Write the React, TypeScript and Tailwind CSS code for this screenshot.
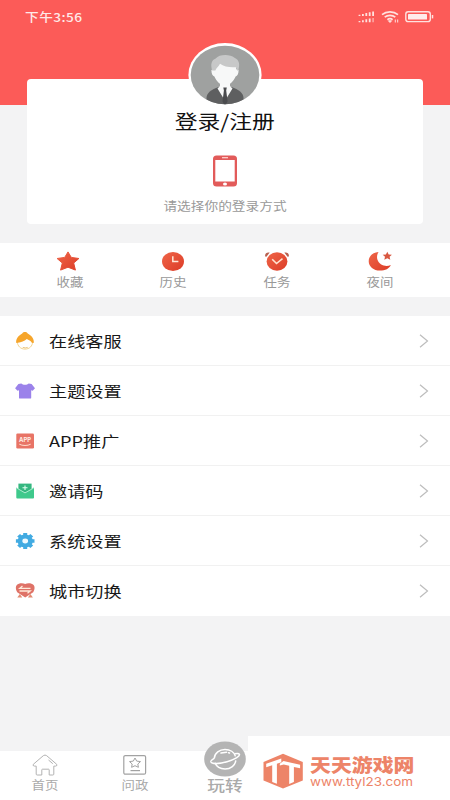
import type { ReactNode } from "react"

const CJK = "font-['Noto_Sans_CJK_SC',sans-serif]"

function StarIcon() {
  return (
    <svg className="w-6 h-5 -ml-[3px]" viewBox="0 0 24 20" fill="url(#warm)" stroke="url(#warm)" strokeWidth="1" strokeLinejoin="round">
      <path d="M12 .9l3.300 5.500 7.600 1.100-5.200 4.500 1.700 7.100L12 16.200l-7.400 2.900L6.300 12 1.100 7.500l7.600-1.100z" />
    </svg>
  )
}

function ClockIcon() {
  return (
    <svg className="w-6 h-5" viewBox="0 0 24 20">
      <ellipse cx="12" cy="10.500" rx="11" ry="9.400" fill="url(#warm)" />
      <path d="M11.800 5.300v5.200h5.600" fill="none" stroke="#ffe9d8" strokeWidth="1.500" />
    </svg>
  )
}

function AlarmIcon() {
  return (
    <svg className="w-6 h-5" viewBox="0 0 24 20">
      <path d="M.2 5.600C-.4 2.400 2 .8 4.700 1.600L1.400 5.800zM23.800 5.600c.6-3.200-1.800-4.800-4.500-4l3.300 4.200z" fill="#b8604f" />
      <ellipse cx="12" cy="10.500" rx="10.400" ry="9.200" fill="url(#warm)" />
      <path d="M7.200 8.200l4.300 4.300 6-4.800" fill="none" stroke="#ffe3d0" strokeWidth="1.600" />
    </svg>
  )
}

function MoonIcon() {
  return (
    <svg className="w-6 h-5" viewBox="0 0 24 20" fill="url(#warm)">
      <path d="M10.500 1C4.500 1.300.700 5.300.700 10.200c0 5.300 4.900 9.400 11.200 9.400 5.300 0 9.600-2.200 10.900-5.700-2.200 1.200-4.600 1.500-7.100.7C9.700 12.700 7.200 6.200 10.500 1z" />
      <path d="M19.300.8l1.400 2.600 3.200.4-2.300 2 .7 3-3-1.500-3 1.500.7-3-2.300-2 3.200-.4z" fill="#d85840" />
    </svg>
  )
}

function ServiceIcon() {
  return (
    <svg className="w-5 h-5" viewBox="0 0 20 20">
      <path d="M2.300 10.500c.2 4.800 3.400 7.600 7.700 7.600s7.500-2.800 7.700-7.600L12 7z" fill="#fff" stroke="#f1cf83" strokeWidth=".9" />
      <path d="M1.300 12C.6 7.800 3 5 7.200 2.400 8.500.6 11.400.6 12.700 2.400 17 5 19.400 7.800 18.700 12l-1.900-.2c-.5-1.600-2.300-2.500-5-3.800-2.600 2-5.500 3.400-8.900 3.800z" fill="#f6a52b" />
      <path d="M7.800 16.400q2.700 1 4.900 0" fill="none" stroke="#e7b862" strokeWidth=".8" />
    </svg>
  )
}

function ShirtIcon() {
  return (
    <svg className="w-5 h-5" viewBox="0 0 20 20">
      <path d="M6.300 2.500c1.700 1.800 5.700 1.800 7.400 0l2.900.5 3.400 4.200-2.300 2.600-1.500-.6v7.500c0 .5-.3.900-.8.900H4.800c-.5 0-.8-.4-.8-.9V9.200l-1.500.6L.1 7.200 3.400 3z" fill="#9b82ea" />
    </svg>
  )
}

function AppIcon() {
  return (
    <svg className="w-5 h-5" viewBox="0 0 20 20">
      <rect x="1.300" y="2.500" width="17.700" height="15" rx="1.200" fill="#e87466" />
      <text x="10" y="10.800" textAnchor="middle" fontSize="5.800" fontWeight="700" textLength="12" lengthAdjust="spacingAndGlyphs" fill="#fff0e6" fontFamily="Inter, sans-serif">
        APP
      </text>
      <path d="M4.300 13.200c3 1.700 8.400 1.700 11.400 0" fill="none" stroke="#ffe0d0" strokeWidth="1" />
    </svg>
  )
}

function InviteIcon() {
  return (
    <svg className="w-5 h-5" viewBox="0 0 20 20">
      <path d="M3.400 2.600h13.200v9H3.400z" fill="#35b780" />
      <path d="M1.300 6.500l8.700 5 9-5v10.100c0 .5-.3.900-.9.900H2.200c-.6 0-.9-.4-.9-.9z" fill="#3fc98c" />
      <path d="M1.600 7l8.400 4.900L18.700 7" fill="none" stroke="#c9f3df" strokeWidth=".8" />
      <path d="M10 4.400v4.600M7.500 6.700h5" stroke="#e2fff1" strokeWidth="1.100" />
    </svg>
  )
}

function GearIcon() {
  return (
    <svg className="w-5 h-5" viewBox="0 0 20 20">
      <g transform="translate(10.200 10) scale(1 .86)">
        <circle r="7.600" fill="#42abe2" />
        <g stroke="#42abe2" strokeWidth="4" strokeLinejoin="round">
          <path d="M0-9.300V9.300M-9.300 0H9.300M-6.600-6.600L6.600 6.600M6.600-6.600L-6.600 6.600" />
        </g>
        <circle r="2.900" fill="#effaff" />
      </g>
    </svg>
  )
}

function SwitchIcon() {
  return (
    <svg className="w-5 h-5" viewBox="0 0 20 20">
      <path d="M10.200 3C8 1.800 3.600 1.900 1.800 4.100.3 6 .6 8.700 2.200 11.200l8 5.200 8-5.200c1.600-2.500 1.900-5.200.4-7.100-1.800-2.200-6.200-2.300-8.400-1.100z" fill="#df7267" />
      <path d="M15.500 7.300H4.800l2.700-2.200M4.500 10h10.700l-2.700 2.200" fill="none" stroke="#ffeada" strokeWidth="1.300" />
      <path d="M4.800 13l-2.500 3.400h5zM15.400 13l-2.500 3.400h5z" fill="#e38b72" />
    </svg>
  )
}

function Avatar() {
  return (
    <svg className="w-[74px] h-[64px]" viewBox="0 0 74 64">
      <defs>
        <clipPath id="face">
          <ellipse cx="37" cy="32" rx="34.300" ry="29.300" />
        </clipPath>
      </defs>
      <ellipse cx="37" cy="32" rx="36.600" ry="31.900" fill="#fff" />
      <g clipPath="url(#face)">
        <rect width="74" height="64" fill="#9fa1a0" />
        <path d="M18.500 64V55c0-5 5-8.600 12-11h13c7 2.400 12 6 12 11v9z" fill="#5e5f60" />
        <path d="M32 40h10v3l2.500 2.500-5.500 9-2 8-2-8-5.500-9L32 43z" fill="#f8f9f9" />
        <path d="M35.300 44.500h3.500l-.6 3 1.400 11L37 63l-2.500-4.500 1.400-11z" fill="#4a4b4e" />
        <path d="M26 18h22v8l2.600 1c0 3.500-1.200 6-3 6.500-2 5-6.500 9-10.600 9s-8.600-4-10.600-9c-1.800-.5-3-3-3-6.500L26 26z" fill="#f7f8f8" />
        <path d="M24.200 27.500c-2-6.500-.5-10.500 3.500-12 3.500-4.500 14.500-4.500 18.800-.7 5 2 5.500 7 3.800 12.700h-1.200l-1.300-3.300c-6 .5-12-.5-15.800-3.400-1.500 3-3.700 4-4.700 6.700z" fill="#c7c8c8" />
      </g>
    </svg>
  )
}

function StatusIcons() {
  return (
    <svg className="w-[78px] h-4" viewBox="0 0 78 16" fill="none" stroke="#ffe2df">
      <g strokeWidth="1.800">
        <path d="M1.500 8V6.700M4.900 8V6M8.300 8V5M11.700 8V4.200M15.100 8V3.500" />
        <path d="M1.500 14.200v-1.300M4.900 14.200v-2M8.300 14.200v-3M11.700 14.200v-3.700" />
        <path d="M15.100 14.200V10" opacity=".5" />
      </g>
      <path d="M24 6.600c4.500-3.600 11.500-3.600 16 0M26.700 9.200c3-2.400 7.600-2.400 10.600 0M29.400 11.700c1.600-1.200 3.600-1.200 5.200 0" strokeWidth="1.700" />
      <path d="M30.500 12.800h3L32 14.500z" fill="#ffe2df" />
      <path d="M37.300 11.500v3M39.700 11.500v3" strokeWidth="1" />
      <rect x="47.800" y="3.800" width="24.500" height="9.800" rx="2.400" strokeWidth="1.400" />
      <rect x="50" y="5.900" width="19" height="5.600" rx=".6" fill="#ffeceb" stroke="none" />
      <path d="M74.500 7v3.400" strokeWidth="1.500" />
    </svg>
  )
}

function HomeIcon() {
  return (
    <svg className="w-[26px] h-[22px]" viewBox="0 0 26 22" fill="none" stroke="#b2b2b2" strokeWidth="1" strokeLinejoin="round">
      <path d="M11.300 1.700q1.700-1.300 3.400 0l10 8.600q1 1.500-1.200 1.800h-1.700v8q0 .9-1 .9h-3.600v-5.200q0-.6-.7-.6H10.500q-.7 0-.7.600V21H5.200q-1 0-1-.9v-8H2.500Q.3 11.800 1.300 10.300z" />
      <path d="M16.500 6l4.300 3.700" />
    </svg>
  )
}

function PoliticsIcon() {
  return (
    <svg className="w-6 h-[22px]" viewBox="0 0 24 22" fill="none" stroke="#a2a2a2">
      <rect x=".800" y="1.600" width="21.800" height="18.600" rx="1.500" strokeWidth="1.200" />
      <path d="M12 4l1.700 3.100 3.800.5-2.700 2.400.6 3.300-3.400-1.600-3.400 1.600.6-3.300-2.700-2.400 3.800-.5z" />
      <path d="M7.500 16.600H17" strokeWidth="1.200" />
    </svg>
  )
}

function PlanetIcon() {
  return (
    <svg className="w-[42px] h-9" viewBox="0 0 42 36" fill="none" stroke="#fff" strokeWidth="1.500">
      <ellipse cx="21" cy="18" rx="20.800" ry="17.600" fill="#b4b4b4" stroke="none" />
      <path d="M10.300 17.300C10.700 12 15.500 8.600 21 8.600c5 0 9.300 2.700 10.500 6.800M11 21.800c1.500 4 5.800 6.200 10.100 6.200 5.500 0 10.200-3.500 10.700-8.600" />
      <path d="M10.500 17.200c-2.600 1.500-4 2.900-3.600 3.800 1.200 2.100 8.300 1.800 16.100-.3 7.800-2.200 13.200-5.400 12.400-7.300-.4-1-2.300-1.200-4.700-.6" />
      <path d="M17 12.100l5.500-.8M24.500 11.700l1 .3" strokeLinecap="round" />
    </svg>
  )
}

function SiteLogo() {
  return (
    <svg className="w-[42px] h-9" viewBox="0 0 42 36">
      <path d="M21 .7L40.800 9v18.500L21 35.500 1.500 27.500V9z" fill="#ed8468" />
      <g fill="#fff">
        <path d="M4.200 10.800L19.300 5.600v3.600l-4.400 1.500v20.100l-4.700-1.900V12.200l-6 2z" />
        <path d="M17.800 10.800L21.500 8l16.600 3.800v3.500l-6.200-1.400v15.200l-4.700 1.900V12.800l-5.400-1.300-4 1z" />
      </g>
    </svg>
  )
}

const shortcuts: { label: string; icon: ReactNode }[] = [
  { label: "收藏", icon: <StarIcon /> },
  { label: "历史", icon: <ClockIcon /> },
  { label: "任务", icon: <AlarmIcon /> },
  { label: "夜间", icon: <MoonIcon /> },
]

const menu: { label: string; icon: ReactNode }[] = [
  { label: "在线客服", icon: <ServiceIcon /> },
  { label: "主题设置", icon: <ShirtIcon /> },
  { label: "APP推广", icon: <AppIcon /> },
  { label: "邀请码", icon: <InviteIcon /> },
  { label: "系统设置", icon: <GearIcon /> },
  { label: "城市切换", icon: <SwitchIcon /> },
]

export default function App() {
  return (
    <div className={`relative w-[450px] h-[800px] overflow-hidden flex flex-col bg-[#f3f3f4] ${CJK}`}>
      <svg className="absolute w-0 h-0">
        <defs>
          <linearGradient id="warm" x1="0" y1="0" x2="1" y2="1">
            <stop offset="0" stopColor="#ef6548" />
            <stop offset="1" stopColor="#dc3c27" />
          </linearGradient>
        </defs>
      </svg>

      {/* Header */}
      <header className="h-[105px] shrink-0 bg-[#fc5b58] flex items-start justify-between pl-[25px] pr-[14px] pt-2">
        <span className="text-[12px] leading-[18px] font-medium text-[#ffe9e7] tracking-[0.4px] origin-left scale-x-[1.14]">下午3:56</span>
        <StatusIcons />
      </header>

      {/* Login card */}
      <section className="relative -mt-[26px] mx-[27px] h-[145px] shrink-0 rounded bg-white flex flex-col items-center">
        <div className="-mt-9">
          <Avatar />
        </div>
        <h1 className="text-[19px] leading-7 text-[#111] scale-x-[1.2]">登录/注册</h1>
        <svg className="mt-5 w-[26px] h-8" viewBox="0 0 26 32">
          <rect x="1" y=".500" width="24" height="31" rx="3.500" fill="#e25b5a" />
          <rect x="3.300" y="5" width="19.400" height="21.500" fill="#fff" />
          <path d="M10 2.700h6" stroke="#ffd6d2" strokeWidth="1.200" />
          <ellipse cx="13" cy="28.900" rx="2" ry="1.500" fill="#fff" />
        </svg>
        <p className="mt-[9px] text-[12px] leading-[20px] text-[#999] scale-x-[1.14]">请选择你的登录方式</p>
      </section>

      {/* Shortcuts */}
      <section className="mt-[19px] h-[54px] shrink-0 bg-white grid grid-cols-4 px-[18px]">
        {shortcuts.map((s) => (
          <div key={s.label} className="flex flex-col items-center pt-2">
            {s.icon}
            <span className="mt-[2px] text-[12px] leading-[18px] text-[#999] scale-x-[1.12]">{s.label}</span>
          </div>
        ))}
      </section>

      {/* Menu */}
      <ul className="mt-[19px] shrink-0 bg-white">
        {menu.map((m) => (
          <li key={m.label} className="h-[50px] flex items-center pl-[15px] pr-[21px] border-b border-[#f1f1f1] last:border-b-0">
            {m.icon}
            <span className="ml-[14px] text-[15px] leading-6 text-[#181818] origin-left scale-x-[1.21]">{m.label}</span>
            <svg className="ml-auto w-[10px] h-[14px]" viewBox="0 0 10 14" fill="none" stroke="#bdbdbd" strokeWidth="1.200">
              <path d="M1 .700L8.500 7 1 13.300" />
            </svg>
          </li>
        ))}
      </ul>

      {/* Tab bar */}
      <nav className="mt-auto h-[49px] shrink-0 bg-white grid grid-cols-5 text-[#aaa]">
        <div className="flex flex-col items-center pt-[3px]">
          <HomeIcon />
          <span className="text-[12px] leading-[18px] scale-x-[1.12]">首页</span>
        </div>
        <div className="flex flex-col items-center pt-[3px]">
          <PoliticsIcon />
          <span className="text-[12px] leading-[18px] scale-x-[1.12]">问政</span>
        </div>
        <div className="flex flex-col items-center -mt-[10px]">
          <PlanetIcon />
          <span className="-mt-px text-[15px] leading-[18px] font-medium scale-x-[1.18]">玩转</span>
        </div>
      </nav>

      {/* Site badge over the tab bar */}
      <div className="absolute right-0 bottom-0 w-[202px] h-16 bg-white flex items-start pl-[14px] pt-[17px] text-[#ed8468]">
        <SiteLogo />
        <div className="ml-[6px] flex flex-col">
          <span className="text-[18px] leading-[22px] font-black origin-left scale-x-[1.16]">天天游戏网</span>
          <span className="font-['Inter',sans-serif] text-[12px] leading-[14px] origin-left scale-x-[1.12]">www.ttyl23.com</span>
        </div>
      </div>
    </div>
  )
}
